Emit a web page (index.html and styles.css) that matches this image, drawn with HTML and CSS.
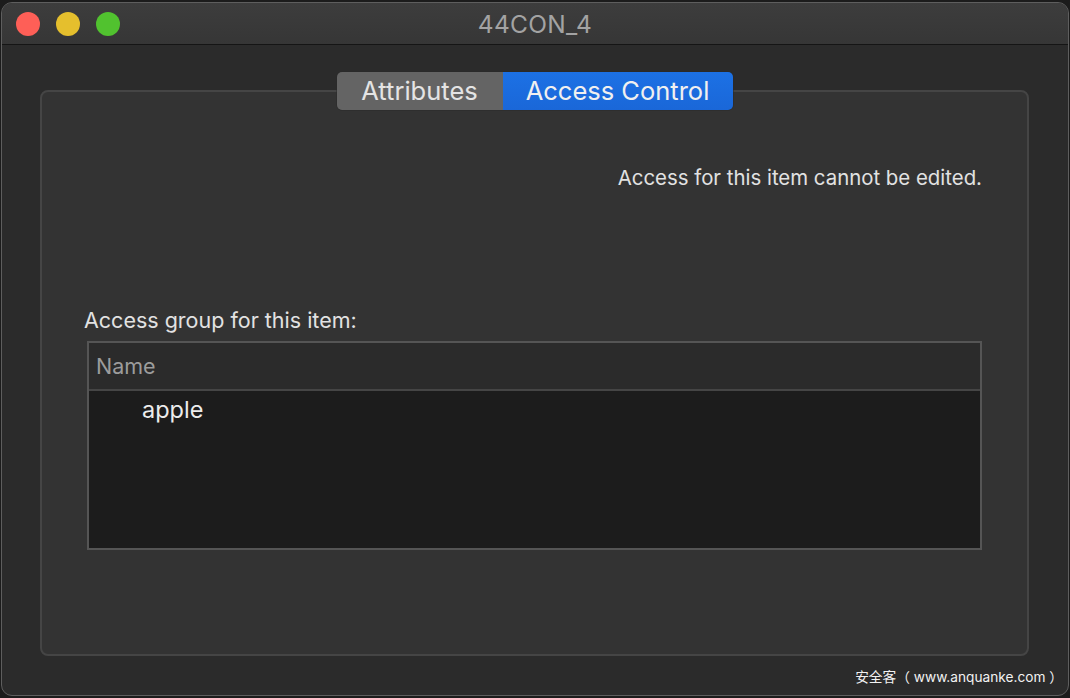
FILE: index.html
```html
<!DOCTYPE html>
<html>
<head>
<meta charset="utf-8">
<link rel="stylesheet" href="styles.css">
</head>
<body>
<div class="window">
  <div class="titlebar">
    <div class="lights">
      <span class="light red"></span>
      <span class="light yellow"></span>
      <span class="light green"></span>
    </div>
    <div class="title">44CON_4</div>
  </div>
  <div class="content">
    <div class="segmented">
      <div class="seg">Attributes</div>
      <div class="seg active">Access Control</div>
    </div>
    <div class="group">
      <p class="notice">Access for this item cannot be edited.</p>
      <p class="label">Access group for this item:</p>
      <div class="table">
        <div class="thead">Name</div>
        <div class="tbody">
          <div class="row">apple</div>
        </div>
      </div>
    </div>
    <div class="watermark">安全客（ www.anquanke.com ）</div>
  </div>
</div>
</body>
</html>
```
FILE: styles.css
```css
html, body {
  margin: 0;
  padding: 0;
}
body {
  background: #1c1c1c;
  width: 1070px;
  height: 698px;
  overflow: hidden;
  font-family: "Inter", "Noto Sans CJK SC", sans-serif;
}
.window {
  margin: 2px 0 0 1px;
  width: 1066px;
  height: 692px;
  border: 1px solid #5e5e5e;
  border-radius: 11px;
  overflow: hidden;
  background: #2b2b2b;
  display: flex;
  flex-direction: column;
}
.titlebar {
  height: 41px;
  flex: none;
  background: linear-gradient(#3d3d3d, #363636);
  border-bottom: 1px solid #151515;
  display: flex;
  align-items: center;
  position: relative;
}
.lights {
  display: flex;
  gap: 16px;
  padding-left: 14px;
}
.light {
  width: 24px;
  height: 24px;
  border-radius: 50%;
  display: block;
}
.red { background: #fe5f57; }
.yellow { background: #e5bf2d; }
.green { background: #51c22f; }
.title {
  position: absolute;
  left: 0;
  right: 0;
  top: 0;
  bottom: 0;
  display: flex;
  align-items: center;
  justify-content: center;
  font-size: 24.5px;
  color: #a3a3a3;
  letter-spacing: 0.3px;
}
.content {
  flex: 1;
  padding: 27px 39px 0 38px;
  display: flex;
  flex-direction: column;
  position: relative;
}
.segmented {
  align-self: center;
  display: flex;
  height: 38px;
  border-radius: 5px;
  overflow: hidden;
  position: relative;
  z-index: 2;
  box-shadow: 0 0 0 0.5px #2a2a2a;
}
.seg {
  display: flex;
  align-items: center;
  justify-content: center;
  font-size: 25.5px;
  color: #e4e4e4;
  background: #646464;
  width: 166px;
  padding-bottom: 1px;
}
.seg.active {
  background: linear-gradient(#1c71e5, #1a67d8);
  color: #f0f0f0;
  width: 230px;
}
.group {
  margin-top: -20px;
  height: 562px;
  border: 2px solid #454545;
  border-radius: 8px;
  background: #333333;
  padding: 0 45px;
  display: flex;
  flex-direction: column;
}
.notice {
  margin: 73px 0 0 0;
  text-align: right;
  font-size: 20.4px;
  color: #e2e2e2;
  line-height: 26px;
}
.label {
  margin: 116px 0 0 -3px;
  font-size: 21.5px;
  color: #e2e2e2;
  line-height: 26px;
}
.table {
  margin-top: 8px;
  height: 205px;
  border: 2px solid #555555;
  display: flex;
  flex-direction: column;
}
.thead {
  height: 46px;
  flex: none;
  background: #2b2b2b;
  border-bottom: 2px solid #454545;
  display: flex;
  align-items: center;
  padding-left: 7px;
  font-size: 21.5px;
  color: #9c9c9c;
}
.tbody {
  flex: 1;
  background: #1c1c1c;
}
.row {
  padding: 5px 0 0 53px;
  font-size: 23.5px;
  color: #ececec;
  line-height: 28px;
}
.watermark {
  align-self: flex-end;
  margin: 12px -34px 0 0;
  font-size: 13.7px;
  color: #f2f2f2;
  line-height: 18px;
}
```
